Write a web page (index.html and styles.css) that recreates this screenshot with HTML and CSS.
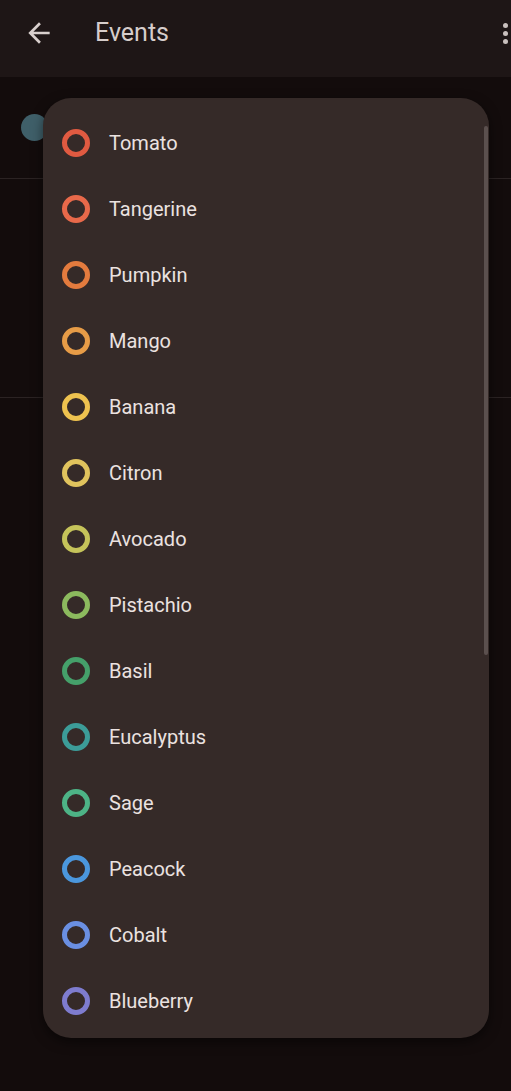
FILE: index.html
```html
<!DOCTYPE html>
<html>
<head>
  <title>Events</title>
  <link rel="stylesheet" href="styles.css">
</head>
<body>

<div class="appbar">
  <svg class="back" width="32" height="32" viewBox="0 0 24 24">
    <path d="M20 11H7.83l5.59-5.59L12 4l-8 8 8 8 1.41-1.41L7.83 13H20v-2z" fill="#d8cfcd"/>
  </svg>
  <div class="title">Events</div>
  <div class="more">
    <span></span><span></span><span></span>
  </div>
</div>

<div class="content">
  <div class="row first">
    <div class="dot"></div>
  </div>
  <div class="row second"></div>
</div>

<div class="menu">
  <div class="scrollbar"></div>
  <ul class="colors">
    <li><span class="ring" style="border-color:#e05a41"></span>Tomato</li>
    <li><span class="ring" style="border-color:#e8694a"></span>Tangerine</li>
    <li><span class="ring" style="border-color:#e37b3e"></span>Pumpkin</li>
    <li><span class="ring" style="border-color:#e79c47"></span>Mango</li>
    <li><span class="ring" style="border-color:#eec24f"></span>Banana</li>
    <li><span class="ring" style="border-color:#e0c35d"></span>Citron</li>
    <li><span class="ring" style="border-color:#c5c35a"></span>Avocado</li>
    <li><span class="ring" style="border-color:#8cba5e"></span>Pistachio</li>
    <li><span class="ring" style="border-color:#45a06a"></span>Basil</li>
    <li><span class="ring" style="border-color:#3c9c98"></span>Eucalyptus</li>
    <li><span class="ring" style="border-color:#4db386"></span>Sage</li>
    <li><span class="ring" style="border-color:#4b97dd"></span>Peacock</li>
    <li><span class="ring" style="border-color:#6a8fe2"></span>Cobalt</li>
    <li><span class="ring" style="border-color:#7e7ccf"></span>Blueberry</li>
  </ul>
</div>

</body>
</html>
```

FILE: styles.css
```css
body {
  margin: 0;
  background-color: #130c0c;
  font-family: Roboto, "Noto Sans", sans-serif;
  height: 1091px;
  overflow: hidden;
  position: relative;
}
.appbar {
  height: 77px;
  background-color: #1e1616;
  display: flex;
  align-items: center;
  padding: 0 0 11px 23px;
  box-sizing: border-box;
}
.back {
  flex: none;
}
.title {
  margin-left: 40px;
  font-size: 25px;
  line-height: 30px;
  color: #d6cdcb;
  flex: 1;
}
.more {
  display: flex;
  flex-direction: column;
  gap: 3px;
  margin-right: 3px;
}
.more span {
  width: 5px;
  height: 5px;
  border-radius: 50%;
  background-color: #c9c0be;
}
.row {
  border-bottom: 1px solid #2b2323;
  box-sizing: border-box;
}
.row.first {
  height: 102px;
  display: flex;
  align-items: center;
  padding-left: 21px;
}
.row.second {
  height: 219px;
}
.dot {
  width: 27px;
  height: 27px;
  border-radius: 50%;
  background-color: #3f5f69;
}
.menu {
  position: absolute;
  left: 43px;
  top: 98px;
  width: 446px;
  height: 940px;
  background-color: #352a28;
  border-radius: 28px;
  box-shadow: 0 4px 12px rgba(0, 0, 0, 0.5);
  overflow: hidden;
}
.scrollbar {
  position: absolute;
  right: 1px;
  top: 28px;
  width: 4px;
  height: 529px;
  border-radius: 2px;
  background-color: #5b504e;
}
.colors {
  list-style: none;
  margin: 0;
  padding: 12px 0 0 0;
}
.colors li {
  height: 66px;
  display: flex;
  align-items: center;
  padding-left: 19px;
  font-size: 20px;
  color: #ebe2e0;
}
.ring {
  width: 18px;
  height: 18px;
  border: 5px solid;
  border-radius: 50%;
  margin-right: 19px;
  flex: none;
}
```
